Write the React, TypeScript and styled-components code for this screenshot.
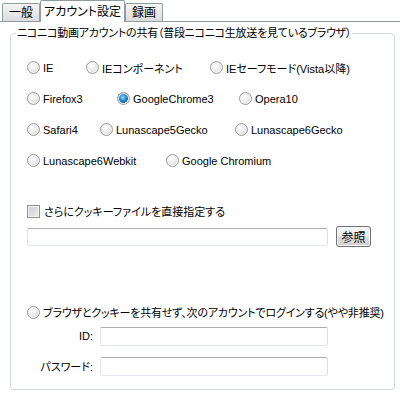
import styled, { createGlobalStyle } from 'styled-components';

const GlobalStyle = createGlobalStyle`
  html, body {
    margin: 0;
    padding: 0;
    background: #ffffff;
  }
  body {
    font-family: "Liberation Sans", "Noto Sans CJK JP", sans-serif;
    font-size: 11px;
    color: #000000;
    font-feature-settings: "palt";
  }
`;

type Option = { label: string; width?: number; checked?: boolean };

const browserRows: Option[][] = [
  [
    { label: 'IE', width: 59 },
    { label: 'IEコンポーネント', width: 124 },
    { label: 'IEセーフモード(Vista以降)' },
  ],
  [
    { label: 'Firefox3', width: 90 },
    { label: 'GoogleChrome3', width: 122, checked: true },
    { label: 'Opera10' },
  ],
  [
    { label: 'Safari4', width: 73 },
    { label: 'Lunascape5Gecko', width: 135 },
    { label: 'Lunascape6Gecko' },
  ],
  [{ label: 'Lunascape6Webkit', width: 139 }, { label: 'Google Chromium' }],
];

const App = () => {
  return (
    <Page>
      <GlobalStyle />
      <TabStrip>
        <Tab>一般</Tab>
        <Tab $active>アカウント設定</Tab>
        <Tab>録画</Tab>
      </TabStrip>
      <Group>
        <Legend>ニコニコ動画アカウントの共有（普段ニコニコ生放送を見ているブラウザ）</Legend>
        <RadioGrid>
          {browserRows.map((row, i) => (
            <RadioRow key={i}>
              {row.map(opt => (
                <OptionLabel key={opt.label} $width={opt.width}>
                  <Radio type="radio" name="browser" defaultChecked={opt.checked} />
                  {opt.label}
                </OptionLabel>
              ))}
            </RadioRow>
          ))}
        </RadioGrid>
        <CheckRow>
          <Check type="checkbox" />
          さらにクッキーファイルを直接指定する
        </CheckRow>
        <FileRow>
          <FileInput type="text" />
          <BrowseButton>参照</BrowseButton>
        </FileRow>
        <LoginRadio>
          <Radio type="radio" name="browser" />
          ブラウザとクッキーを共有せず、次のアカウントでログインする(やや非推奨)
        </LoginRadio>
        <CredRow>
          <CredLabel>ID:</CredLabel>
          <CredInput type="text" />
        </CredRow>
        <CredRow $gap={10}>
          <CredLabel>パスワード:</CredLabel>
          <CredInput type="password" />
        </CredRow>
      </Group>
    </Page>
  );
};

export default App;

const Page = styled.div`
  width: 400px;
  height: 398px;
  background: #ffffff;
  overflow: hidden;
`;

const TabStrip = styled.div`
  display: flex;
  align-items: flex-end;
  height: 21px;
  padding-left: 2px;
  border-bottom: 1px solid #919b9c;
`;

const Tab = styled.div<{ $active?: boolean }>`
  box-sizing: border-box;
  height: ${p => (p.$active ? 22 : 18)}px;
  margin-bottom: ${p => (p.$active ? -1 : 0)}px;
  padding: 0 ${p => (p.$active ? 3 : 6)}px;
  display: flex;
  align-items: center;
  border: 1px solid #919b9c;
  border-bottom: none;
  border-radius: 2px 2px 0 0;
  background: ${p =>
    p.$active
      ? '#ffffff'
      : 'linear-gradient(#f4f4f4, #e6e6e6 60%, #dcdcdc)'};
  font-size: 12px;
  line-height: 14px;
  white-space: nowrap;
`;

const Group = styled.fieldset`
  box-sizing: border-box;
  width: 385px;
  height: 364px;
  margin: 4px 0 0 10px;
  padding: 0 0 0 16px;
  border: 1px solid #d3d9de;
  border-radius: 4px;
  min-inline-size: 0;
`;

const Legend = styled.legend`
  padding: 0 1px;
  margin-left: -11px;
  font-size: 11px;
  line-height: 14px;
  letter-spacing: -0.25px;
  white-space: nowrap;
`;

const RadioGrid = styled.div`
  display: flex;
  flex-direction: column;
  padding-top: 12px;
`;

const RadioRow = styled.div`
  display: flex;
  align-items: center;
  height: 31px;
`;

const OptionLabel = styled.label<{ $width?: number }>`
  display: flex;
  align-items: center;
  gap: 3px;
  flex: none;
  width: ${p => (p.$width ? `${p.$width}px` : 'auto')};
  white-space: nowrap;
`;

const Radio = styled.input`
  appearance: none;
  margin: 0;
  width: 13px;
  height: 13px;
  flex: none;
  border-radius: 50%;
  border: 1px solid #9a9a9a;
  box-sizing: border-box;
  background: radial-gradient(circle at 40% 35%, #ffffff 0%, #f0f0f0 35%, #d4d4d4 100%);
  box-shadow: inset 0 0 0 1px #f6f6f6;

  &:checked {
    background: radial-gradient(circle at 45% 40%, #8fd8ff 0%, #2a8fd8 35%, #0c5aa0 60%, #e9e9e9 63%, #d0d0d0 100%);
  }
`;

const CheckRow = styled.label`
  display: flex;
  align-items: center;
  gap: 4px;
  height: 20px;
  margin-top: 25px;
  white-space: nowrap;
`;

const Check = styled.input`
  appearance: none;
  margin: 0;
  width: 13px;
  height: 13px;
  flex: none;
  box-sizing: border-box;
  border: 1px solid #8f8f8f;
  background: linear-gradient(135deg, #c8ccd2, #eeeeee);
  box-shadow: inset 0 0 0 1px #f4f4f4;
`;

const FileRow = styled.div`
  display: flex;
  align-items: center;
  gap: 8px;
  height: 21px;
  margin-top: 5px;
`;

const FieldBase = styled.input`
  box-sizing: border-box;
  margin: 0;
  padding: 0 3px;
  border: 1px solid;
  border-color: #abadb3 #dbdfe6 #e3e9ef #e2e3ea;
  border-radius: 2px;
  background: #ffffff;
  font: inherit;
  outline: none;
`;

const FileInput = styled(FieldBase)`
  width: 301px;
  height: 18px;
`;

const BrowseButton = styled.button`
  box-sizing: border-box;
  width: 35px;
  height: 21px;
  margin: 0;
  padding: 0;
  border: 1px solid #707070;
  border-radius: 3px;
  background: linear-gradient(#f6f6f6, #ebebeb 48%, #dddddd 52%, #cfcfcf);
  box-shadow: inset 0 0 0 1px #fcfcfc;
  font: inherit;
  font-size: 12px;
  color: #000000;
`;

const LoginRadio = styled.label`
  display: flex;
  align-items: center;
  gap: 3px;
  height: 20px;
  margin-top: 55px;
  white-space: nowrap;
  letter-spacing: -0.2px;
`;

const CredRow = styled.div<{ $gap?: number }>`
  display: flex;
  align-items: center;
  gap: 7px;
  height: 20px;
  margin-top: ${p => p.$gap ?? 4}px;
`;

const CredLabel = styled.span`
  width: 66px;
  text-align: right;
  white-space: nowrap;
`;

const CredInput = styled(FieldBase)`
  width: 228px;
  height: 19px;
`;
